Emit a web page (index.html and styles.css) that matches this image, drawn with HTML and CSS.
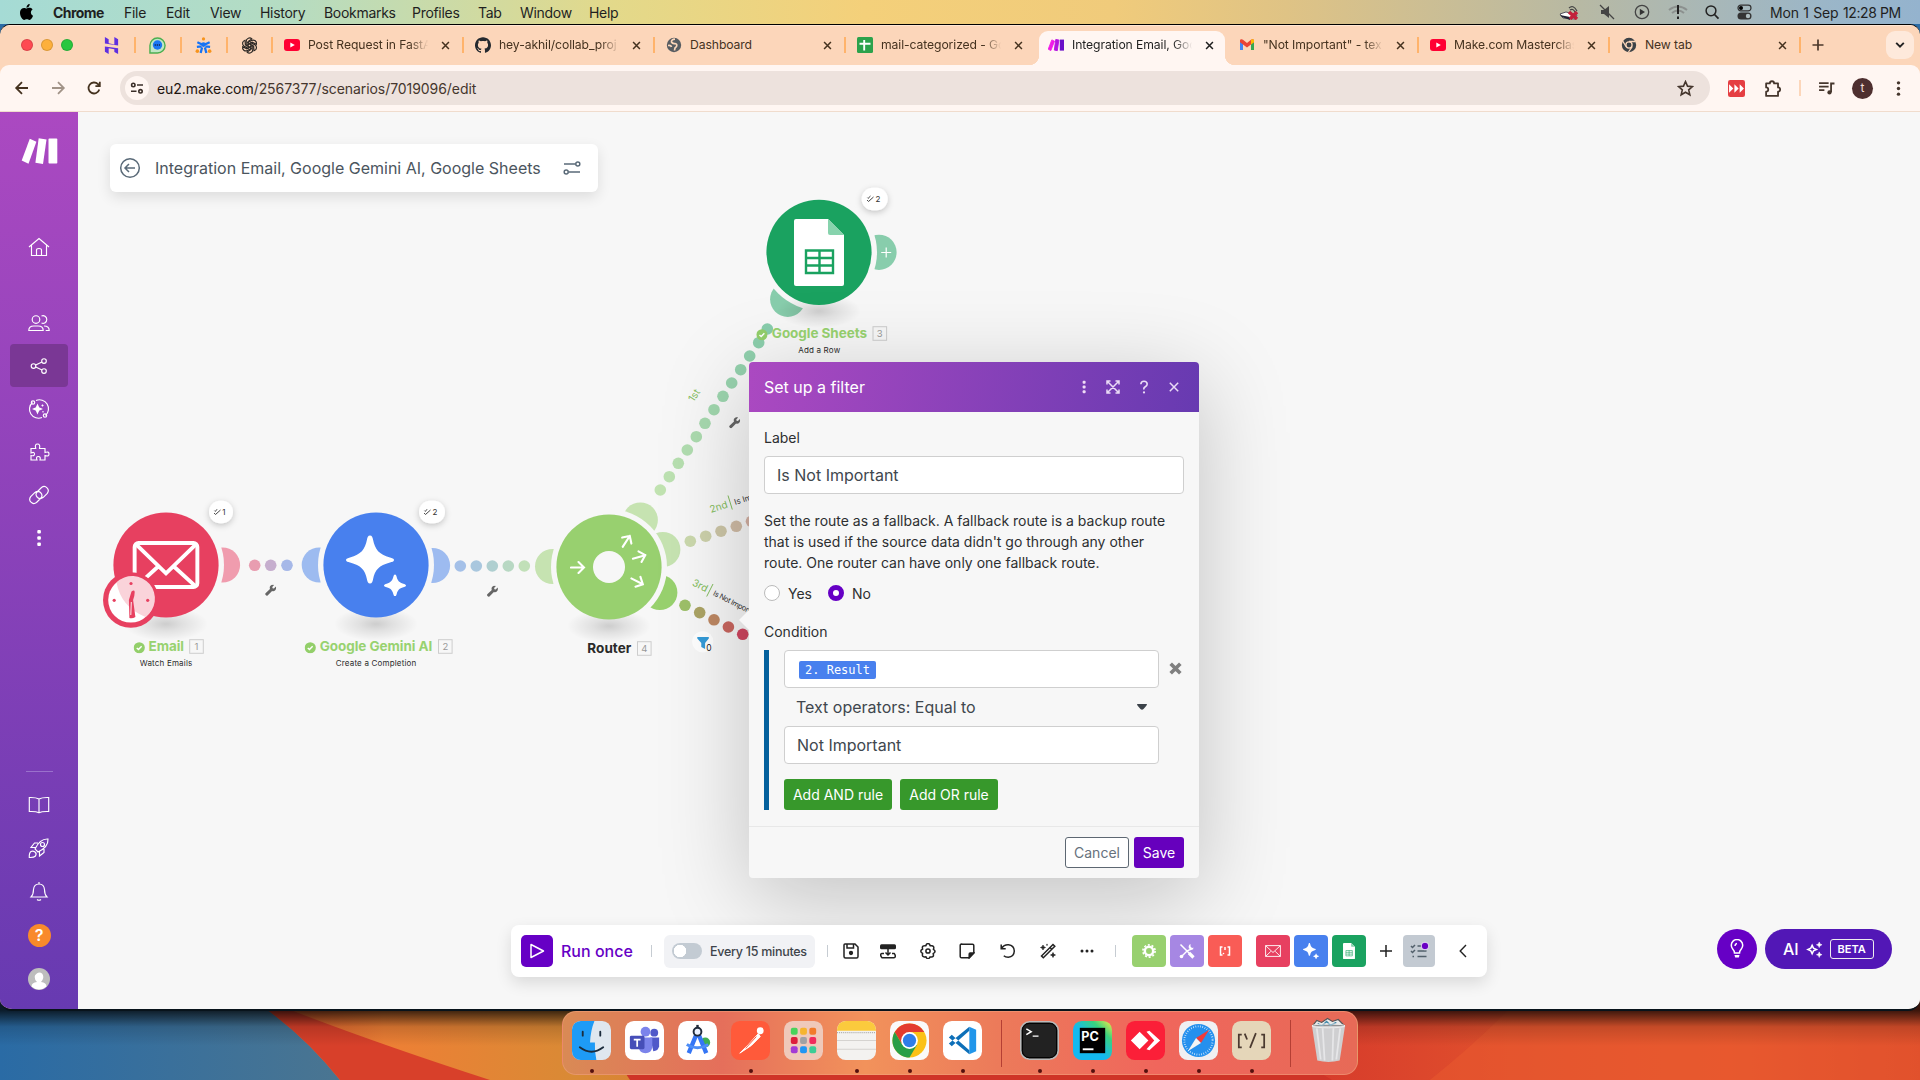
FILE: index.html
```html
<!DOCTYPE html>
<html lang="en">
<head>
<meta charset="utf-8">
<title>Integration Email, Google Gemini AI, Google Sheets</title>
<link rel="stylesheet" href="styles.css">
</head>
<body>
<svg class="defs" aria-hidden="true">
  <symbol id="close" viewBox="0 0 10 10"><path d="M1.2 1.2l7.6 7.6M8.8 1.2L1.2 8.8" fill="none" stroke="currentColor" stroke-width="1.7"/></symbol>
  <symbol id="youtube" viewBox="0 0 16 12"><rect width="16" height="12" rx="3" fill="#ff0033"/><path d="M6.3 3.4v5.2L10.8 6z" fill="#fff"/></symbol>
  <symbol id="make" viewBox="0 0 36 26"><path d="M8.300 .8l6.600 2.900L7 25.800 .2 22.600z"/><path d="M17.200 .3l7.800 1.200-3.500 24.500-7.600-1.200z"/><rect x="27" y=".6" width="8.800" height="25" rx=".8"/></symbol>
  <symbol id="wrench" viewBox="0 0 12 12"><path d="M11.300 2.200L9.300 4.200 7.900 3.800 7.600 2.500 9.500.6C8 0 6 .5 5.200 2.100c-.4.8-.3 1.700 0 2.500L.8 8.800a1.500 1.500 0 0 0 2.200 2.300l4.400-4.300c2.700.9 5-1.800 3.900-4.600z" fill="#666"/></symbol>
  <symbol id="check" viewBox="0 0 12 12"><circle cx="6" cy="6" r="5.800" fill="#93cf6a"/><path d="M3.400 6.200l1.800 1.700 3.300-3.500" fill="none" stroke="#fff" stroke-width="1.500"/></symbol>
  <symbol id="mail" viewBox="0 0 68 50"><g fill="none" stroke="currentColor" stroke-width="4"><rect x="2" y="2" width="64" height="45" rx="4"/><path d="M4 4l30 29L64 4M4 46l22-20M64 46L42 26"/></g></symbol>
  <symbol id="spark" viewBox="0 0 60 60"><path fill="currentColor" d="M24 0c2 0 2.600 2 3 4 2 10 6 15 17 18 2 .5 4 1 4 2.500s-2 2-4 2.500c-11 3-15 7-17 17-.4 2-1 4-3 4s-2.600-2-3-4C19 34 15 30 4 27c-2-.500-4-1-4-2.500S2 22.500 4 22c11-3 15-8 17-18 .400-2 1-4 3-4zM49 39c1 0 1.300 1.200 1.700 2.500 1 4 2.800 5.500 6.600 6.700 1.400.400 2.700.800 2.700 1.800s-1.300 1.400-2.700 1.800c-3.800 1.200-5.600 2.800-6.600 6.700-.4 1.300-.7 2.500-1.700 2.500s-1.300-1.200-1.700-2.500c-1-4-2.800-5.500-6.600-6.700C39.300 51.400 38 51 38 50s1.300-1.400 2.700-1.800c3.800-1.200 5.600-2.800 6.600-6.700.4-1.300.7-2.500 1.700-2.500z"/></symbol>
  <symbol id="sheet" viewBox="0 0 50 67"><path d="M2 0h32l16 16v49a2 2 0 0 1-2 2H2a2 2 0 0 1-2-2V2a2 2 0 0 1 2-2z" fill="#fff"/><path d="M34 0l16 16H36a2 2 0 0 1-2-2z" fill="#87d3ad"/><path d="M12 31.500h27v22.500H12zM12 39h27M12 46.500h27M25.500 31v23" fill="none" stroke="#1aa260" stroke-width="2.400"/></symbol>
  <symbol id="counter" viewBox="0 0 8 8"><path d="M.6 5l1.400 1.500L7 2M.8 2.600l.8.800L4 1" fill="none" stroke="#444" stroke-width="1"/></symbol>
  <symbol id="arrow" viewBox="0 0 16 14"><path d="M1 7h13M8.500 1.500L14 7l-5.500 5.500" fill="none" stroke="#fff" stroke-width="2.100" stroke-linecap="round"/></symbol>
</svg>

<header class="menubar">
  <svg class="apple" viewBox="0 0 24 24"><path d="M12.152 6.896c-.948 0-2.415-1.078-3.960-1.040-2.040.027-3.910 1.183-4.961 3.014-2.117 3.675-.546 9.103 1.519 12.090 1.013 1.454 2.208 3.090 3.792 3.039 1.520-.065 2.090-.987 3.935-.987 1.831 0 2.350.987 3.960.948 1.637-.026 2.676-1.480 3.676-2.948 1.156-1.688 1.636-3.325 1.662-3.415-.039-.013-3.182-1.221-3.220-4.857-.026-3.040 2.480-4.494 2.597-4.559-1.429-2.090-3.623-2.324-4.390-2.376-2-.156-3.675 1.090-4.610 1.090zM15.530 3.830c.843-1.012 1.400-2.427 1.245-3.830-1.207.052-2.662.805-3.532 1.818-.780.896-1.454 2.338-1.273 3.714 1.338.104 2.715-.688 3.559-1.701"/></svg>
  <nav class="menus"><b>Chrome</b><span>File</span><span>Edit</span><span>View</span><span>History</span><span>Bookmarks</span><span>Profiles</span><span>Tab</span><span>Window</span><span>Help</span></nav>
  <div class="status">
    <svg viewBox="0 0 20 16"><path d="M1 10l6-2 11 3-2 4-12-1z" fill="#fff" stroke="#334" stroke-width=".8"/><path d="M1 11l10 2v3L3 13z" fill="#223"/><path d="M10 8l8 7M18 8l-7 7" stroke="#c3203a" stroke-width="3.500"/><path d="M10 4q4-4 8 3M11 6q3-2 5 2" fill="none" stroke="#444" stroke-width="1.200"/></svg>
    <svg viewBox="0 0 20 16"><path d="M4 6h3l5-4v12l-5-4H4z" fill="#444"/><path d="M3 1l14 14" stroke="#444" stroke-width="1.300"/></svg>
    <svg viewBox="0 0 20 16"><circle cx="10" cy="8" r="6.700" fill="none" stroke="#444" stroke-width="1.300"/><path d="M7.800 4.800v6.400L13 8z" fill="#333"/></svg>
    <svg viewBox="0 0 20 16"><path d="M1 6q9-7 18 0M4 9q6-5 12 0" fill="none" stroke="#777" opacity=".6" stroke-width="2"/><path d="M10 1v9M10 12.500v2.500" stroke="#222" stroke-width="2"/></svg>
    <svg viewBox="0 0 20 16"><circle cx="9" cy="6.800" r="4.900" fill="none" stroke="#222" stroke-width="1.500"/><path d="M12.500 10.500l4 4.200" stroke="#222" stroke-width="1.800"/></svg>
    <svg viewBox="0 0 20 16"><rect x="3" y="1.200" width="13" height="5.600" rx="2.800" fill="none" stroke="#333" stroke-width="1.200"/><circle cx="6" cy="4" r="2"/><rect x="2.500" y="8.500" width="14" height="7" rx="3.500" fill="#333"/><circle cx="13" cy="12" r="2.200" fill="#aebcbf"/></svg>
  </div>
  <time class="date">Mon 1 Sep</time><time class="clock">12:28 PM</time>
</header>

<main class="window">
  <div class="tabstrip">
    <div class="lights"><i class="red"></i><i class="amber"></i><i class="green"></i></div>
    <div class="pinned"><svg viewBox="0 0 16 18"><path d="M1 0l4 2.500v4L11 8V0l4 2.500V9L1 7zM1 10l14 2v6l-4-2v-3L5 12v6l-4-2.500z" fill="#5f2fe0"/></svg></div>
    <div class="pinned"><svg viewBox="0 0 18 18"><path d="M1 17V9a8 8 0 1 1 8 8z" fill="#bfe6c4" stroke="#4caf50" stroke-width="1.500"/><circle cx="9" cy="8.500" r="5" fill="#1976f3"/><path d="M6 8.500h6" stroke="#124" stroke-width="1.500" stroke-dasharray="1.200 1"/></svg></div>
    <div class="pinned"><svg viewBox="0 0 18 18"><g fill="none" stroke="#1673f5" stroke-width="2.400"><path d="M2.500 5.500l5 2.500M15.500 5.500l-5 2.500M2 10.500l5-.5M16 10.500l-5-.5M6 17l1.500-6M12 17l-1.500-6"/></g><g fill="#f7941d"><circle cx="9" cy="2" r="1.700"/><circle cx="2.500" cy="15" r="1.900"/><circle cx="15.500" cy="15" r="1.900"/></g><circle cx="9" cy="8" r="2.500" fill="#1673f5"/></svg></div>
    <div class="pinned"><svg viewBox="-9 -9 18 18"><g fill="none" stroke="#2c2825" stroke-width="1.250"><path id="petal" d="M-3.500 1V-4.500a3.500 3.500 0 0 1 6-2.400L-1.500 -4.200V2.200"/><use href="#petal" transform="rotate(60)"/><use href="#petal" transform="rotate(120)"/><use href="#petal" transform="rotate(180)"/><use href="#petal" transform="rotate(240)"/><use href="#petal" transform="rotate(300)"/></g></svg></div>
    <div class="tab fade"><svg class="fav"><use href="#youtube"/></svg><span>Post Request in FastA</span><svg class="x"><use href="#close"/></svg></div>
    <div class="tab fade"><svg class="fav" viewBox="0 0 24 24"><path fill="#24292f" d="M12 .297c-6.630 0-12 5.373-12 12 0 5.303 3.438 9.800 8.205 11.385.6.113.82-.258.82-.577 0-.285-.01-1.040-.015-2.040-3.338.724-4.042-1.610-4.042-1.610C4.422 18.070 3.633 17.700 3.633 17.700c-1.087-.744.084-.729.084-.729 1.205.084 1.838 1.236 1.838 1.236 1.070 1.835 2.809 1.305 3.495.998.108-.776.417-1.305.76-1.605-2.665-.3-5.466-1.332-5.466-5.930 0-1.310.465-2.380 1.235-3.220-.135-.303-.54-1.523.105-3.176 0 0 1.005-.322 3.300 1.230.96-.267 1.980-.399 3-.405 1.020.006 2.040.138 3 .405 2.280-1.552 3.285-1.230 3.285-1.230.645 1.653.24 2.873.12 3.176.765.840 1.230 1.910 1.230 3.220 0 4.610-2.805 5.625-5.475 5.920.42.360.81 1.096.81 2.220 0 1.606-.015 2.896-.015 3.286 0 .315.210.690.825.570C20.565 22.092 24 17.592 24 12.297c0-6.627-5.373-12-12-12"/></svg><span>hey-akhil/collab_proj</span><svg class="x"><use href="#close"/></svg></div>
    <div class="tab"><svg class="fav" viewBox="0 0 16 16"><circle cx="8" cy="8" r="7.200" fill="#575c61"/><path d="M9 2.200Q5 2.500 5.500 5q1 2 3.500 1.500 2.500.5 1.500 3-2 1-2 4M2 8.500q3-.5 3.500 1.500" stroke="#fbd6ba" stroke-width="1.700" fill="none"/></svg><span>Dashboard</span><svg class="x"><use href="#close"/></svg></div>
    <div class="tab fade before-active"><svg class="fav" viewBox="0 0 16 16"><rect width="16" height="16" rx="1.500" fill="#2ba24c"/><path d="M7.200 3v10.500M2.500 6.800h11" stroke="#fff" stroke-width="1.900"/></svg><span>mail-categorized - Go</span><svg class="x"><use href="#close"/></svg></div>
    <div class="tab fade active"><svg class="fav" viewBox="0 0 36 26"><path fill="#f01be8" stroke="#f01be8" stroke-width="2" d="M8.600 1.500l6 2.800L6.500 25.500.5 22.500z"/><path fill="#b514e0" stroke="#b514e0" stroke-width="2" d="M17.500.5l7 1.200-3.500 24-6.800-1.200z"/><rect fill="#6a0fc8" x="26.500" y=".8" width="9.500" height="24.800"/></svg><span>Integration Email, Goo</span><svg class="x"><use href="#close"/></svg></div>
    <div class="tab fade"><svg class="fav" viewBox="0 0 16 16"><path d="M1 4v9h3V6z" fill="#4285f4"/><path d="M15 4v9h-3V6z" fill="#34a853"/><path d="M1 3.500C1 2 3 1.800 4 2.700L8 6l4-3.300c1-.9 3-.7 3 .8v1.800L8 10.500 1 5.300z" fill="#ea4335"/><path d="M12 2.700c1-.9 3-.7 3 .8v1.800l-3 2.300z" fill="#fbbc04"/></svg><span>"Not Important" - tex</span><svg class="x"><use href="#close"/></svg></div>
    <div class="tab fade"><svg class="fav"><use href="#youtube"/></svg><span>Make.com Masterclas</span><svg class="x"><use href="#close"/></svg></div>
    <div class="tab"><svg class="fav" viewBox="0 0 16 16"><circle cx="8" cy="8" r="7.200" fill="#3c4247"/><circle cx="8" cy="8" r="3.100" fill="none" stroke="#fbd6ba" stroke-width="1.300"/><path d="M8 4.500h6.500M5 9.500L1.700 4M11 9.800L7.500 15" stroke="#fbd6ba" stroke-width="1.300"/></svg><span>New tab</span><svg class="x"><use href="#close"/></svg></div>
    <svg class="newtab" viewBox="0 0 12 12"><path d="M6 .5v11M.5 6h11" stroke="#4b382b" stroke-width="1.700"/></svg>
    <button class="tabsearch"><svg viewBox="0 0 10 8"><path d="M1.200 1.800L5 5.600l3.800-3.800" fill="none" stroke="#222" stroke-width="1.900"/></svg></button>
  </div>

  <div class="navbar">
    <svg class="nav" viewBox="0 0 16 16"><path d="M14 8H2.500M8 2.200L2.200 8 8 13.800"/></svg>
    <svg class="nav dim" viewBox="0 0 16 16"><path d="M2 8h11.500M8 2.200L13.800 8 8 13.800"/></svg>
    <svg class="nav" viewBox="0 0 16 16"><path d="M13.300 9.500A5.500 5.500 0 1 1 12 4.200L13.500 6M13.800 1.800V6.200H9.400"/></svg>
    <div class="omnibox">
      <span class="site"><svg viewBox="0 0 14 12"><g fill="none" stroke="#3a2e28" stroke-width="1.600"><circle cx="3.300" cy="3" r="1.700"/><path d="M7 3h6M1 9.300h5.500"/><circle cx="10.500" cy="9.300" r="1.700"/></g></svg></span>
      <span class="url"><b>eu2.make.com</b>/2567377/scenarios/7019096/edit</span>
      <svg class="star" viewBox="0 0 16 16"><path d="M8 1.500l1.900 4.300 4.700.4-3.600 3.100 1.100 4.600L8 11.500l-4.100 2.400L5 9.300 1.400 6.200l4.700-.4z" fill="none" stroke="#45362d" stroke-width="1.500"/></svg>
    </div>
    <div class="extensions">
      <svg viewBox="0 0 16 16"><rect width="16" height="16" rx="2" fill="#e53e42"/><path d="M1 4l4 4-4 4zM6 4l4 4-4 4zM11 4l4 4-4 4z" fill="#fff"/></svg>
      <svg viewBox="0 0 16 16"><path d="M2 3.200h3.500a2 2 0 0 1 4 0h3.700V7a2 2 0 0 1 0 4v4H2v-4a2 2 0 0 0 0-4z" fill="none" stroke="#45362d" stroke-width="1.700" stroke-linejoin="round"/></svg>
      <i class="bar"></i>
      <svg viewBox="0 0 16 16"><path d="M1 3h9M1 6.300h9M1 9.600h5" stroke="#45362d" stroke-width="1.600"/><path d="M12.300 11.500V3.300H15.500" fill="none" stroke="#45362d" stroke-width="1.700"/><circle cx="10.800" cy="11.700" r="2" fill="#45362d"/></svg>
      <span class="me">t</span>
      <svg viewBox="0 0 16 16" fill="#45362d"><circle cx="8" cy="2.700" r="1.600"/><circle cx="8" cy="8" r="1.600"/><circle cx="8" cy="13.300" r="1.600"/></svg>
    </div>
  </div>

  <div class="app">
    <aside class="sidebar">
      <svg class="logo" fill="#fff"><use href="#make"/></svg>
      <a class="item home"><svg viewBox="0 0 22 22"><path d="M1 11L11 2.500 21 11M3.500 9.500V19.500h15V9.500M8.500 19.500V14q0-1.500 2.500-1.500t2.500 1.500v5.500"/></svg></a>
      <a class="item"><svg viewBox="0 0 22 22"><circle cx="8" cy="7.500" r="3.800"/><path d="M.8 18.500q0-4.500 5-4.500h4.400q5 0 5 4.500zM13.500 4a3.800 3.800 0 1 1 0 7M16 14q5.200 0 5.200 4.500h-3.500"/></svg></a>
      <a class="item on"><svg viewBox="0 0 22 22"><circle cx="5.500" cy="11" r="2.300"/><circle cx="16" cy="6" r="2.300"/><circle cx="16" cy="16" r="2.300"/><path d="M7.700 10L14 7M7.700 12l6.300 3"/></svg></a>
      <a class="item"><svg viewBox="0 0 22 22"><path d="M4.500 4.500a9 9 0 0 0 9.500 15M17.500 17.500A9 9 0 0 0 8 2.500"/><circle cx="17" cy="17.500" r="1.700"/><circle cx="5" cy="4.500" r="1.700"/><path fill="#fff" d="M9.500 7l1.200 2.800 2.800 1.200-2.800 1.200L9.500 15l-1.200-2.800L5.500 11l2.800-1.200zM14.500 6.500v2M13.500 7.500h2M15 13v1.500"/></svg></a>
      <a class="item"><svg viewBox="0 0 22 22"><path d="M3 7.500h4.700Q6.500 3 9.500 3t2 4.500H17v4q4-1.500 4 1.500t-4 1.500V19h-5q1-3.500-1.700-3.500T9 19H3v-4.500q3.500 1 3.500-1.500T3 12z"/></svg></a>
      <a class="item"><svg viewBox="0 0 22 22"><path d="M9.500 13.500q-3-3 0-6l4-4q3-2.200 5.500.3t.3 5.500l-4 4q-3 2.500-5.800.2M12.500 8.500q3 3 0 6l-4 4q-3 2.200-5.500-.3t-.3-5.500l4-4q3-2.500 5.800-.2"/></svg></a>
      <a class="item"><svg viewBox="0 0 22 22"><g fill="#fff" stroke="none"><rect x="9.300" y="3" width="3.600" height="3.600" rx="1"/><rect x="9.300" y="9.200" width="3.600" height="3.600" rx="1"/><rect x="9.300" y="15.400" width="3.600" height="3.600" rx="1"/></g></svg></a>
      <hr>
      <a class="item"><svg viewBox="0 0 22 22"><path d="M11 5q-3-1.700-9.700-1.500v14Q8 17.200 11 18.700q3-1.500 9.700-1.200v-14Q14 3.300 11 5zM11 5v13.500"/></svg></a>
      <a class="item"><svg viewBox="0 0 22 22"><path d="M7 12Q12 1.500 20 2q.5 8-10 13zM7.500 10.500H3L6.500 6H10M11.500 14.500V19l4.500-3.500V12M3 14.500Q1 16 1.300 20.500 6 20.700 7.500 19 9 16.500 7 15T3 14.500z"/><circle cx="14.500" cy="7.500" r="2"/></svg></a>
      <a class="item"><svg viewBox="0 0 22 22"><path d="M3 17Q5.500 14.500 5.500 9.500 6 4 11 4t5.500 5.500q0 5 2.500 7.500zM11 4V2M9 19.500q2 1.500 4 0"/></svg></a>
      <a class="item help"><span>?</span></a>
      <a class="item last"><svg viewBox="0 0 22 22"><circle cx="11" cy="11" r="11" fill="#bdbdbd" stroke="none"/><path d="M11 4.500c3 0 4.300 2 4.300 4.500S13 14 13 14q5.500.7 5.500 4.500a11 11 0 0 1-15 0Q3.500 14.700 9 14 6.700 12 6.700 9T11 4.500z" fill="#fff" stroke="none"/></svg></a>
    </aside>

    <section class="canvas">
      <svg class="flow" viewBox="78 112 1842 897">
        <defs>
          <radialGradient id="shade"><stop offset="0" stop-color="#000" stop-opacity=".17"/><stop offset=".4" stop-color="#000" stop-opacity=".09"/><stop offset="1" stop-color="#000" stop-opacity="0"/></radialGradient>
          <filter id="lift" x="-50%" y="-50%" width="200%" height="200%"><feDropShadow dx="0" dy="2" stdDeviation="3" flood-opacity=".22"/></filter>
        </defs>
        <!-- connector ears -->
        <circle cx="222.500" cy="565" r="17.600" fill="#f09cae"/>
        <g fill="#9dbbf0"><circle cx="319.300" cy="565" r="17.600"/><circle cx="432.500" cy="565.500" r="17.600"/></g>
        <g fill="#c6e3b1"><circle cx="552.600" cy="566.500" r="17.600"/><circle cx="662.800" cy="549.500" r="17.600"/><circle cx="640.300" cy="520" r="17.600"/></g>
        <circle cx="659.800" cy="592.500" r="17.600" fill="#98d16e"/>
        <g fill="#88cdac"><circle cx="787.700" cy="299.300" r="17.600"/><circle cx="879" cy="252.300" r="17.600"/></g>
        <path d="M886.200 247.500v10M881.200 252.500h10" stroke="#fff" stroke-width="1.200"/>
        <g fill="#f7f7f7"><circle cx="166" cy="565" r="58"/><circle cx="376" cy="565" r="58"/><circle cx="609" cy="567" r="58"/><circle cx="819" cy="252.300" r="58"/></g>
        <g fill="url(#shade)"><ellipse cx="166" cy="624" rx="42" ry="17"/><ellipse cx="376" cy="624" rx="42" ry="17"/><ellipse cx="609" cy="626" rx="42" ry="17"/><ellipse cx="819" cy="311" rx="42" ry="17"/></g>
        <circle cx="166" cy="565" r="52.600" fill="#e74060"/><circle cx="376" cy="565" r="52.600" fill="#4880ee"/><circle cx="609" cy="567" r="52.600" fill="#98d06f"/><circle cx="819" cy="252.300" r="52.600" fill="#1aa260"/>
        <!-- routes -->
        <circle cx="254.700" cy="565.300" r="5.800" fill="#e89db0"/><circle cx="270.700" cy="565.300" r="5.800" fill="#c6aece"/><circle cx="287" cy="565.300" r="5.800" fill="#a6b8e8"/>
        <circle cx="460.300" cy="566" r="5.800" fill="#a4c0e8"/><circle cx="476.300" cy="566" r="5.800" fill="#a9c7de"/><circle cx="492.300" cy="566" r="5.800" fill="#afcfd0"/><circle cx="508.300" cy="566" r="5.800" fill="#b8d8c3"/><circle cx="524.300" cy="566" r="5.800" fill="#c1e0b8"/>
        <circle cx="660.300" cy="490" r="5.800" fill="#c1e3b1"/><circle cx="669.300" cy="476.700" r="5.800" fill="#bce1b1"/><circle cx="678.300" cy="463.300" r="5.800" fill="#b7dfb0"/><circle cx="687.300" cy="450" r="5.800" fill="#b1ddb0"/><circle cx="696.300" cy="436.700" r="5.800" fill="#acdbaf"/><circle cx="705" cy="423.300" r="5.800" fill="#a7d9af"/><circle cx="714" cy="409.700" r="5.800" fill="#a1d7ae"/><circle cx="723" cy="396.300" r="5.800" fill="#9cd5ae"/><circle cx="731.700" cy="383" r="5.800" fill="#98d3ae"/><circle cx="740.700" cy="369.700" r="5.800" fill="#94d1ad"/><circle cx="749.700" cy="356" r="5.800" fill="#90d0ad"/><circle cx="758.700" cy="342.700" r="5.800" fill="#8cceac"/><circle cx="767.300" cy="329" r="5.800" fill="#88cdac"/>
        <circle cx="690.300" cy="541.200" r="5.800" fill="#cbd9ad"/><circle cx="705.700" cy="536.200" r="5.800" fill="#cdd1ab"/><circle cx="721" cy="531.200" r="5.800" fill="#cdc6a7"/><circle cx="736.300" cy="526.300" r="5.800" fill="#d0bca6"/><circle cx="751.500" cy="521.300" r="5.800" fill="#d4b1a4"/>
        <circle cx="685" cy="605.300" r="5.800" fill="#9dc069"/><circle cx="699.700" cy="612.600" r="5.800" fill="#aca465"/><circle cx="714" cy="619.800" r="5.800" fill="#be8863"/><circle cx="728.400" cy="627" r="5.800" fill="#c9665f"/><circle cx="742.700" cy="634.300" r="5.800" fill="#d04660"/>
        <use href="#mail" x="132" y="541" width="68" height="49" color="#fff"/>
        <use href="#spark" x="346" y="535" width="60" height="61" color="#fff"/>
        <use href="#sheet" x="794" y="219" width="50" height="67"/>
        <circle cx="609" cy="567" r="16" fill="#f7f7f7"/>
        <use href="#arrow" x="570" y="560.500" width="16" height="14"/>
        <use href="#arrow" x="618.500" y="534" width="16" height="14" transform="rotate(-57 626.500 541)"/>
        <use href="#arrow" x="631.500" y="549.800" width="16" height="14" transform="rotate(-16 639.500 556.800)"/>
        <use href="#arrow" x="629.500" y="574.500" width="16" height="14" transform="rotate(27 637.500 581.500)"/>
        <!-- schedule clock -->
        <circle cx="130.800" cy="600" r="27.800" fill="#e74060"/><circle cx="130.800" cy="600" r="22.600" fill="#fff"/>
        <path d="M116.500 582.500A22.600 22.600 0 1 1 145.500 617Q121 607 116.500 582.500z" fill="#fad3da"/>
        <g fill="#e74060"><circle cx="131" cy="583.500" r="1.600"/><circle cx="114.200" cy="600.300" r="1.600"/><circle cx="147.700" cy="600.300" r="1.600"/><path d="M131.500 591.500q3-2 3.200.5 0 4-1.600 8l2.300 17q-3 2-6 1l-.5-18z"/></g><path d="M131.300 602l-.5 13" stroke="#fff" stroke-width=".9"/>
        <use href="#wrench" x="265" y="584.500" width="11.500" height="11.500"/><use href="#wrench" x="486.800" y="585.500" width="11.500" height="11.500"/><use href="#wrench" x="729" y="417" width="11.500" height="11.500"/>
        <!-- operation counters -->
        <g filter="url(#lift)" fill="#fff"><rect x="209" y="500.700" width="24" height="22.600" rx="11.300"/><rect x="419" y="500.700" width="26" height="22.600" rx="11.300"/><rect x="861.700" y="187.700" width="26" height="22.600" rx="11.300"/></g>
        <use href="#counter" x="213.500" y="508" width="8" height="8"/><use href="#counter" x="423.500" y="508" width="8" height="8"/><use href="#counter" x="866.500" y="195" width="8" height="8"/>
        <g class="ops"><text x="222.300" y="514.800">1</text><text x="432.500" y="514.800">2</text><text x="875.500" y="201.800">2</text></g>
        <!-- names -->
        <use href="#check" x="133.500" y="642" width="11.500" height="11.500"/><use href="#check" x="304.500" y="642" width="11.500" height="11.500"/><use href="#check" x="756.200" y="329" width="11.500" height="11.500"/>
        <g class="name"><text x="148.500" y="651.400" textLength="35.500">Email</text><text x="319.800" y="651.400" textLength="112.500">Google Gemini AI</text><text x="771.800" y="338.300" textLength="95.200">Google Sheets</text><text class="dark" x="587.300" y="653.400" textLength="44">Router</text></g>
        <g fill="none" stroke="#cdcdcd"><rect x="189.700" y="639.700" width="13.600" height="13.600"/><rect x="438.500" y="639.700" width="13.600" height="13.600"/><rect x="637.500" y="641.700" width="13.600" height="13.600"/><rect x="873" y="326.700" width="13.600" height="13.600"/></g>
        <g class="num"><text x="196.500" y="650">1</text><text x="445.300" y="650">2</text><text x="644.300" y="652">4</text><text x="879.800" y="337">3</text></g>
        <g class="sub"><text x="166" y="666" textLength="52.500">Watch Emails</text><text x="376" y="666" textLength="80.500">Create a Completion</text><text x="819.200" y="353" textLength="42">Add a Row</text></g>
        <!-- route labels -->
        <g class="ord"><text transform="translate(693.500 402.500) rotate(-56)">1st</text><text transform="translate(711 513) rotate(-18)">2nd</text><text transform="translate(691.500 585) rotate(26.700)">3rd</text></g>
        <path d="M728 495.500l4.300 14M713 584l-6.300 12.500" stroke="#83bd5c" stroke-width="1"/>
        <g class="cond"><text transform="translate(735.300 505) rotate(-18)">Is Important</text><text class="tight" transform="translate(712.500 595) rotate(26.700)" textLength="51">Is Not Important</text></g>
        <circle cx="702.800" cy="641.800" r="10.600" fill="#fff"/><path d="M697.300 637h11.500v1.500l-3.700 4.500v6l-3.800-2v-4l-4-4.500z" fill="#349bd8"/><text class="zero" x="706.200" y="651">0</text>
      </svg>

      <div class="title">
        <svg viewBox="0 0 22 22"><circle cx="11" cy="11" r="9.300"/><path d="M16 11H6.500M10 7l-4 4 4 4"/></svg>
        <h1>Integration Email, Google Gemini AI, Google Sheets</h1>
        <svg class="sliders" viewBox="0 0 18 14"><path d="M1 3h11.500M5.500 11H17"/><circle cx="14.800" cy="3" r="2"/><circle cx="3.200" cy="11" r="2"/></svg>
      </div>

      <div class="toolbar">
        <button class="play"><svg viewBox="0 0 16 16"><path d="M2 1.500v13L14.500 8z" fill="none" stroke="#fff" stroke-width="1.500" stroke-linejoin="round"/></svg></button>
        <span class="run">Run once</span>
        <i class="sep s1"></i>
        <div class="schedule"><i class="toggle"></i><span>Every 15 minutes</span></div>
        <i class="sep s2"></i>
        <div class="tools">
          <svg viewBox="0 0 16 16"><path d="M2 1h10l3 3v9.500a1.500 1.500 0 0 1-1.500 1.500h-11A1.500 1.500 0 0 1 1 13.500V2a1 1 0 0 1 1-1zM4 1v4h6.500V1"/><circle cx="8" cy="10" r="1.400" fill="#222"/></svg>
          <svg viewBox="0 0 16 16"><rect x="0" y="1.200" width="16" height="5" rx="1.500" fill="#222" stroke="none"/><path d="M8 6v5.500M5.500 9.500L8 12l2.500-2.500M4 10.500H1.800Q.7 10.500.7 12T2 14.700h12q1.300 0 1.300-1.500t-1.100-2.700H12"/></svg>
          <svg viewBox="0 0 16 16"><path d="M6.500 1.300Q8-.2 9.500 1.300l.7 1.400 1.600.1Q14 3 13.800 5l-.4 1.200 1 1q1.200 1.300-.2 2.600l-1 .8.3 1.500q0 2-2 2l-1.500-.1-.6 1Q8 16.400 6.600 15l-.7-1.200-1.600.1q-2.100-.2-1.900-2.200l.2-1.300-1.100-.9Q.200 8.100 1.500 6.900l1.100-.8L2.300 4.700Q2.400 2.800 4.300 2.800l1.500-.1z"/><circle cx="8" cy="8" r="2.100"/></svg>
          <svg viewBox="0 0 16 16"><path d="M2.500 1.200h11a1.300 1.300 0 0 1 1.300 1.300V10l-4.600 4.800H2.500a1.300 1.300 0 0 1-1.300-1.300v-11a1.300 1.300 0 0 1 1.300-1.500z"/><path d="M14.800 10l-4.600 4.800V11q0-1 1-1z" fill="#222"/></svg>
          <svg viewBox="0 0 16 16"><path d="M1.200 1.500v4.300h4.500M1.500 5.500Q4 1.500 8.500 1.800q5.500.6 5.800 6.200-.3 5.800-6 6.300-3 0-4.500-1.500"/></svg>
          <svg viewBox="0 0 16 16"><path d="M1.500 13L13 1.500l1.800 1.700L3.300 14.800zM10 4.500L11.500 6"/><path fill="#222" stroke-width=".6" d="M3 2l.8 1.700L5.500 4.500l-1.700.8L3 7l-.8-1.700L.5 4.500l1.700-.8zM13 9.500l.8 1.700 1.700.8-1.700.8-.8 1.700-.8-1.700-1.700-.8 1.700-.8zM7 .8v2M6 1.800h2"/></svg>
          <svg viewBox="0 0 16 16"><g fill="#222" stroke="none"><circle cx="3" cy="8" r="1.500"/><circle cx="8" cy="8" r="1.500"/><circle cx="13" cy="8" r="1.500"/></g></svg>
        </div>
        <i class="sep s3"></i>
        <div class="apps">
          <b class="c1"><svg viewBox="0 0 16 16"><circle cx="8" cy="8" r="4.200" fill="none" stroke="#fff" stroke-width="2.500"/><circle cx="8" cy="8" r="6.100" fill="none" stroke="#fff" stroke-width="1.600" stroke-dasharray="2 1.830"/></svg></b>
          <b class="c2"><svg viewBox="0 0 16 16"><path d="M1.500 1.500l7 7M8.500 8.500l5.500 5.500M14 5.500Q10 7 8 8L2 14" stroke="#fff" stroke-width="1.500" fill="none"/><path d="M10 10l4.500 4.500" stroke="#fff" stroke-width="3.200"/><path d="M11.500 1q-2.700 1.500-1.500 4.500 2.500 2 5-.8l-2 .2-1.500-1.500z" fill="#fff"/><circle cx="2.500" cy="13.500" r="1.800" fill="#fff"/></svg></b>
          <b class="c3"><svg viewBox="0 0 16 16"><path d="M5.500 4H3.500v8h2M10.500 4h2v8h-2" fill="none" stroke="#fff" stroke-width="1.500"/><path d="M8 4v3" stroke="#fff" stroke-width="1.500"/><circle cx="6.500" cy="10.500" r=".8" fill="#fff"/></svg></b>
          <b class="c4"><svg viewBox="0 0 16 16"><path d="M.6 2.600h14.800v10.800H.6zM.6 2.600L8 9.500l7.400-6.900M.6 13.400l5.200-5M15.400 13.400l-5.200-5" fill="none" stroke="#fff" stroke-width=".9"/></svg></b>
          <b class="c5"><svg color="#fff"><use href="#spark"/></svg></b>
          <b class="c6"><svg><use href="#sheet"/></svg></b>
        </div>
        <svg class="plus" viewBox="0 0 12 12"><path d="M6 0v12M0 6h12" stroke="#222" stroke-width="1.500"/></svg>
        <div class="queue"><svg viewBox="0 0 18 16"><path d="M1 3l1.500 1.500L5 2M1 8l1.500 1.500L5 7M7.500 3h6M7.500 8h9M7.500 13.500h9M2.500 13.500h1.500" fill="none" stroke="#52606b" stroke-width="1.500"/><circle cx="15" cy="3" r="3.800" fill="#6a00c4" stroke="#fff" stroke-width=".8"/></svg></div>
        <svg class="chev" viewBox="0 0 8 14"><path d="M7 1L1.200 7 7 13" fill="none" stroke="#222" stroke-width="1.400"/></svg>
      </div>

      <div class="assist">
        <button class="bulb"><svg viewBox="0 0 16 20"><path d="M5.500 14Q5.500 12 3.700 10A5.700 5.700 0 1 1 12.300 10Q10.500 12 10.500 14zM6 7Q6 5 8 4.600" fill="none" stroke="#fff" stroke-width="1.500"/><path d="M5.500 16h5l-.7 2.500H6.200z" fill="#fff"/></svg></button>
        <button class="ai"><span>AI</span><svg viewBox="0 0 18 18"><path d="M7 4.500l1.400 3.100L11.500 9l-3.100 1.400L7 13.500l-1.400-3.100L2.500 9l3.100-1.400z" fill="none" stroke="#fff" stroke-width="1.600" transform="translate(-.5 0)"/><path fill="#fff" d="M14 1l.9 2.100L17 4l-2.100.9L14 7l-.9-2.100L11 4l2.100-.9zM14 11.500l.9 2.100 2.100.9-2.100.9-.9 2.100-.9-2.100-2.100-.9 2.100-.9z" stroke="#fff" stroke-width=".5"/></svg><em>BETA</em></button>
      </div>

      <form class="modal">
        <header><h2>Set up a filter</h2>
          <svg viewBox="0 0 14 14" fill="#f0dcf6"><rect x="5.600" y=".8" width="3" height="3" rx="1"/><rect x="5.600" y="5.500" width="3" height="3" rx="1"/><rect x="5.600" y="10.200" width="3" height="3" rx="1"/></svg>
          <svg viewBox="0 0 14 14"><path d="M1 4.500V1h3.500M9.500 1H13v3.500M13 9.500V13H9.500M4.500 13H1V9.500M1.500 1.500l11 11M12.500 1.500l-11 11" fill="none" stroke="#eadcf6" stroke-width="1.500"/></svg>
          <svg viewBox="0 0 14 14"><path d="M3.800 4.300Q4 1.200 7 1.200t3.200 2.800Q10.200 5.700 8.300 6.700T7 9.500" fill="none" stroke="#eadcf6" stroke-width="1.600"/><circle cx="7" cy="12.400" r="1.100" fill="#eadcf6"/></svg>
          <svg viewBox="0 0 14 14"><path d="M2.800 2.800l8.400 8.400M11.200 2.800l-8.400 8.400" stroke="#eadcf6" stroke-width="1.500"/></svg>
        </header>
        <div class="body">
          <label class="lbl">Label</label>
          <div class="input">Is Not Important</div>
          <p>Set the route as a fallback. A fallback route is a backup route that is used if the source data didn't go through any other route. One router can have only one fallback route.</p>
          <div class="radios"><i></i><span>Yes</span><i class="sel"></i><span>No</span></div>
          <label class="lbl cnd">Condition</label>
          <div class="rule">
            <div class="fields">
              <div class="input"><span class="tag">2. Result</span></div>
              <div class="select">Text operators: Equal to<svg viewBox="0 0 10 6"><path d="M0 0h10Q9.800 1.500 8.500 2.800L6.500 5Q5 6.500 3.500 5L1.500 2.800Q.2 1.500 0 0z" fill="#3b4249"/></svg></div>
              <div class="input">Not Important</div>
              <div class="adds"><button type="button">Add AND rule</button><button type="button">Add OR rule</button></div>
            </div>
            <svg class="remove" viewBox="0 0 14 14"><path d="M2.500 2.500l9 9M11.500 2.500l-9 9" stroke="#808080" stroke-width="3.400"/></svg>
          </div>
        </div>
        <footer><button type="button" class="cancel">Cancel</button><button type="button" class="save">Save</button></footer>
      </form>
    </section>
  </div>
</main>

<div class="desk">
  <svg class="wall" viewBox="0 0 1920 82" preserveAspectRatio="none">
    <defs>
      <linearGradient id="blue"><stop offset="0" stop-color="#2a6ba5"/><stop offset="1" stop-color="#4a7591"/></linearGradient>
      <linearGradient id="orange"><stop offset="0" stop-color="#c92f28"/><stop offset=".14" stop-color="#dd5a2c"/><stop offset=".2" stop-color="#ee7f35"/><stop offset=".3" stop-color="#d98a35"/><stop offset=".68" stop-color="#d63a2b"/><stop offset=".8" stop-color="#e2532d"/><stop offset=".9" stop-color="#e8592f"/><stop offset="1" stop-color="#d8482a"/></linearGradient>
      <linearGradient id="fall" x2="0" y2="1"><stop offset=".25" stop-opacity=".75"/><stop offset=".6" stop-opacity=".15"/><stop offset="1" stop-opacity="0"/></linearGradient>
    </defs>
    <rect width="1920" height="82" fill="url(#orange)"/>
    <path d="M0 0h250q50 32 90 82H0z" fill="url(#blue)"/><path d="M250 0h10q100 40 230 82H340Q300 32 250 0z" fill="#d8402a"/>
    <path d="M622 70h690l20 12H630z" fill="#cf3427"/><path d="M1430 82q50-40 90-82h400v82z" fill="#e8592f" opacity=".6"/>
    <rect width="1920" height="48" fill="url(#fall)"/>
  </svg>
  <div class="dock">
    <span class="run-dot"><svg viewBox="0 0 40 40"><rect width="40" height="40" rx="9" fill="#dfe7ef"/><path d="M9 0h14q-4 10-4.500 22h5q-.5 9 1.500 18H9a9 9 0 0 1-9-9V9a9 9 0 0 1 9-9z" fill="#1e9bf6"/><path d="M11 11v4M29 11v4M8 27q12 9 24 0" fill="none" stroke="#1c2c3c" stroke-width="1.900" stroke-linecap="round"/></svg></span>
    <span><svg viewBox="0 0 40 40"><rect width="40" height="40" rx="9" fill="#fff"/><circle cx="30" cy="12" r="4" fill="#5059c9"/><circle cx="21" cy="11" r="5" fill="#7b83eb"/><path d="M26 17h9v9q-1 5-6 5z" fill="#5059c9"/><path d="M14 17h14v10q-1 6-7 6t-7-6z" fill="#7b83eb"/><rect x="5" y="15" width="15" height="14" rx="1.500" fill="#464eb8"/><path d="M9 19h7M12.500 19v7.500" stroke="#fff" stroke-width="1.800"/></svg></span>
    <span><svg viewBox="0 0 40 40"><rect width="40" height="40" rx="9" fill="#fff"/><circle cx="28" cy="22" r="5" fill="#3fae53"/><path d="M20 11L11 33M20 11l9 22" stroke="#3576f5" stroke-width="4.500"/><path d="M9 24q11 7 22 0" fill="none" stroke="#4c8df6" stroke-width="3"/><circle cx="20" cy="11" r="4" fill="#eaf1ff" stroke="#202b3a" stroke-width="2"/><path d="M20 4v3" stroke="#202b3a" stroke-width="2.500"/></svg></span>
    <span class="run-dot"><svg viewBox="0 0 40 40"><rect width="40" height="40" rx="9" fill="#ff5a3a"/><circle cx="30" cy="10" r="3.500" fill="#fff"/><path d="M28 13L18 24l-9 9 12-8 9-9z" fill="#fff" stroke="#fff"/><path d="M26 16L15 28" stroke="#ff5a3a" stroke-width="1"/></svg></span>
    <span><svg viewBox="0 0 40 40"><rect width="40" height="40" rx="9" fill="#efc9ba"/><g><rect x="7" y="7" width="7" height="7" rx="2" fill="#48d25b"/><rect x="16.500" y="7" width="7" height="7" rx="2" fill="#f6b42e"/><rect x="26" y="7" width="7" height="7" rx="2" fill="#f27b2b"/><rect x="7" y="16.500" width="7" height="7" rx="2" fill="#dd1f3c"/><rect x="16.500" y="16.500" width="7" height="7" rx="2" fill="#a1a1a3"/><rect x="26" y="16.500" width="7" height="7" rx="2" fill="#f22c5d"/><rect x="7" y="26" width="7" height="7" rx="2" fill="#a33bd5"/><rect x="16.500" y="26" width="7" height="7" rx="2" fill="#2196f3"/><rect x="26" y="26" width="7" height="7" rx="2" fill="#3ccd96"/></g></svg></span>
    <span class="run-dot"><svg viewBox="0 0 40 40"><rect width="40" height="40" rx="9" fill="#f3f2f0"/><path d="M0 10V9a9 9 0 0 1 9-9h22a9 9 0 0 1 9 9v1z" fill="#fbca3d"/><path d="M0 12h40" stroke="#999" stroke-dasharray="1 1"/><path d="M0 20h40M0 29h40" stroke="#d4d2cf"/></svg></span>
    <span class="run-dot"><svg viewBox="0 0 40 40"><rect width="40" height="40" rx="9" fill="#fafafa"/><circle cx="20" cy="20" r="17.500" fill="#fbc116"/><path d="M4.800 11.300A17.500 17.500 0 0 1 35.200 11.300H20L12.500 24z" fill="#e33b2e"/><path d="M4.800 11.300A17.500 17.500 0 0 0 20 37.500l7.600-13L12.400 24z" fill="#299e47"/><circle cx="20" cy="20" r="8.600" fill="#fff"/><circle cx="20" cy="20" r="6.800" fill="#2f7de8"/></svg></span>
    <span class="run-dot"><svg viewBox="0 0 40 40"><rect width="40" height="40" rx="9" fill="#fff"/><path d="M27 6l7 3v22l-7 3z" fill="#2196ea"/><path d="M27 10L9 26l-3-3L27 6zM27 30L9 14l-3 3 21 17z" fill="#0d6fb8"/></svg></span>
    <i></i>
    <span class="run-dot"><svg viewBox="0 0 40 40"><rect x=".8" y=".8" width="38.400" height="38.400" rx="9" fill="#1d1d1d" stroke="#bbb" stroke-width="1.600"/><rect x="2.500" y="2.500" width="35" height="35" rx="7" fill="#222" stroke="#000"/><path d="M6.500 8l5 3-5 3M13 15.500h6" fill="none" stroke="#fff" stroke-width="1.500"/></svg></span>
    <span class="run-dot"><svg viewBox="0 0 40 40"><defs><linearGradient id="pc" x1="0" y1="1" x2="1" y2="0"><stop offset=".45" stop-color="#14b9f0"/><stop offset=".75" stop-color="#39d27e"/><stop offset="1" stop-color="#f5ec45"/></linearGradient></defs><rect width="40" height="40" rx="9" fill="url(#pc)"/><rect x="7" y="7" width="26" height="26"/><text x="8.500" y="21" class="pc">PC</text><path d="M10 29h11" stroke="#fff" stroke-width="2"/></svg></span>
    <span class="run-dot"><svg viewBox="0 0 40 40"><rect width="40" height="40" rx="9" fill="#fb1f38"/><path d="M14 11l9 9-9 9-9-9zM21 11l3-1 11 10-11 10-3-1 8-9z" fill="#fff"/></svg></span>
    <span class="run-dot"><svg viewBox="0 0 40 40"><rect width="40" height="40" rx="9" fill="#f0eff2"/><circle cx="20" cy="20" r="17" fill="#2590ee"/><circle cx="20" cy="20" r="14.500" fill="none" stroke="#fff" stroke-width="2" stroke-dasharray=".6 1.800"/><path d="M31 9L17.500 17.500l5 5z" fill="#f13b3b"/><path d="M9 31l8.500-13.500 5 5z" fill="#f4f4f4"/></svg></span>
    <span class="run-dot"><svg viewBox="0 0 40 40"><rect width="40" height="40" rx="9" fill="#e5d6b9"/><path d="M10 14H7v13h3M30 14h3v13h-3M13 13l2.500 6M24.500 12.500l-6 15" fill="none" stroke="#4b3a30" stroke-width="1.800"/></svg></span>
    <i></i>
    <span><svg class="trash" viewBox="0 0 40 46"><path d="M4 8l4-5 5 2 6-4 5 3 6-2 6 6z" fill="#e8e8e8" stroke="#555" stroke-width="1.200"/><path d="M9 6l4 3 5-5 4 4 6-3" stroke="#3f88a8" fill="none" stroke-width="1.500"/><path d="M3 8h34l-5.500 36q-11.500 3-23 0z" fill="#cfcfd1"/><path d="M8 11l4 32M14 11l2 33M32 11l-4 32M25 11l-1 33" stroke="#e6e6e8" stroke-width="1.800"/><ellipse cx="20" cy="8.500" rx="17" ry="2" fill="none" stroke="#eee"/></svg></span>
  </div>
</div>
</body>
</html>
```
FILE: styles.css
```css
* { box-sizing: border-box; }
body { margin: 0; width: 1920px; height: 1080px; overflow: hidden; background: #2a6ba5; font-family: Inter, "Liberation Sans", sans-serif; color: #1f1f1f; display: flex; flex-direction: column; }
button { font: inherit; border: 0; padding: 0; }
i, em { font-style: normal; }
svg { flex: none; display: block; }
.defs { position: absolute; width: 0; height: 0; }

/* macOS menu bar */
.menubar { height: 24px; flex: none; display: flex; align-items: center; padding-left: 18px; font-size: 14px; background: linear-gradient(90deg, #a5dbd5, #b5dcc2 15%, #e3d98a 32%, #f4d07a 45%, #f0cb7b 58%, #dfc385 67%, #b8b9a3 82%, #9bb6c8 95%, #94b3ce); }
.apple { width: 17px; height: 16px; }
.menus { display: grid; grid-template-columns: 71px 42px 44px 50px 64px 88px 66px 42px 69px 40px; margin-left: 18px; letter-spacing: -.3px; white-space: nowrap; }
.menus b { font-weight: 700; letter-spacing: -.55px; }
.status { margin-left: auto; display: grid; grid-template-columns: 38px 35px 36px 34px 33px 35px; justify-items: start; }
.status svg { width: 20px; height: 16px; }
.date { width: 73px; letter-spacing: -.2px; white-space: nowrap; word-spacing: .8px; }
.clock { width: 77px; letter-spacing: -.4px; white-space: nowrap; }

/* browser chrome */
.window { height: 987px; flex: none; border-top: 1px solid #000; border-bottom: 2px solid #08131b; border-radius: 10px 10px 12px 12px; overflow: hidden; background: #fcd6ba; display: flex; flex-direction: column; }
.tabstrip { height: 40px; flex: none; display: flex; align-items: center; box-shadow: inset 0 1px #ffe6d4; }
.lights { display: flex; gap: 8px; width: 90px; padding-left: 21px; }
.lights i { width: 12px; height: 12px; border-radius: 50%; border: 1px solid #0002; }
.red { background: #fe4a52; } .amber { background: #fdb03c; } .green { background: #28c73f; }
.pinned { width: 46px; height: 16px; display: flex; align-items: center; justify-content: center; border-right: 2px solid #ffb36b; flex: none; padding-right: 1px; }
.pinned:nth-of-type(5) { width: 45px; }
.pinned svg { width: 17px; height: 17px; }
.tab { width: 191px; height: 16px; flex: none; display: flex; align-items: center; border-right: 2px solid #ffb36b; padding-left: 11px; font-size: 12.200px; color: #45321f; }
.fav { width: 16px; height: 16px; margin-right: 8px; }
.tab span { width: 124px; white-space: nowrap; letter-spacing: -.1px; line-height: 18px; }
.fade span { -webkit-mask-image: linear-gradient(90deg, #000 82%, transparent 97%); mask-image: linear-gradient(90deg, #000 82%, transparent 97%); }
.x { width: 9px; height: 9px; margin-left: 9px; }
.before-active { border-color: transparent; }
.active { position: relative; height: 34px; align-self: flex-end; border-color: transparent; color: #1f1f1f; padding: 0 0 6px 11px; z-index: 0; }
.active::before { content: ""; position: absolute; z-index: -1; inset: 0 1px 0 2px; background: #fff6f2; border-radius: 9px 9px 0 0; }
.active::after { content: ""; position: absolute; z-index: -1; left: -8px; right: -9px; bottom: 0; height: 10px; background: radial-gradient(circle at 0 0, transparent 10px, #fff6f2 10.500px) left / 10px 10px no-repeat, radial-gradient(circle at 100% 0, transparent 10px, #fff6f2 10.500px) right / 10px 10px no-repeat; }
.newtab { width: 12px; height: 12px; margin-left: 11px; }
.tabsearch { margin-left: auto; margin-right: 6px; width: 28px; height: 28px; border-radius: 9px; background: #fee9db; display: grid; place-items: center; }
.tabsearch svg { width: 10px; height: 8px; }
.navbar { height: 47px; flex: none; background: #fff6f2; border-bottom: 1px solid #f0dccd; border-radius: 9px 9px 0 0; display: flex; align-items: center; padding-left: 14px; gap: 20px; }
.nav { width: 16px; height: 16px; fill: none; stroke: #45321f; stroke-width: 1.800; }
.dim { opacity: .5; }
.omnibox { width: 1590px; height: 34px; border-radius: 17px; background: #ede2dd; display: flex; align-items: center; padding: 0 16px 0 5px; margin-left: -2px; }
.site { width: 24px; height: 24px; border-radius: 50%; background: #fff6f2; display: grid; place-items: center; }
.site svg { width: 14px; height: 12px; }
.url { margin-left: 8px; font-size: 14px; letter-spacing: -.06px; color: #45362d; }
.url b { font-weight: 400; color: #1d1510; }
.star { width: 17px; height: 17px; margin-left: auto; }
.extensions { display: flex; align-items: center; gap: 18px; margin-left: -2px; width: 186px; }
.extensions svg { width: 17px; height: 17px; }
.extensions svg:nth-of-type(2) { margin-left: 1px; }
.extensions svg:last-child { margin-left: -1px; }
.bar { width: 2px; height: 16px; background: #fcd6ba; margin-right: -1px; }
.extensions .me { width: 21px; height: 21px; border-radius: 50%; background: #4e2f2f; color: #f2dcd6; font-size: 12px; line-height: 20px; text-align: center; margin-left: -1px; flex: none; }

/* application */
.app { flex: 1; display: flex; min-height: 0; }
.sidebar { width: 78px; flex: none; background: linear-gradient(#ab49c1, #673ab1); display: flex; flex-direction: column; align-items: center; }
.logo { width: 37px; height: 26px; margin-top: 26px; }
.item { width: 58px; height: 43px; display: grid; place-items: center; flex: none; }
.item svg { width: 22px; height: 22px; fill: none; stroke: #fff; stroke-width: 1.150; }
.home { margin: 61px 0 33px; }
.on { background: #7a3795; border-radius: 4px; }
.sidebar hr { width: 27px; border: 0; border-top: 1px solid #9a71cc; margin: 212px 0 11px; flex: none; }
.help span { width: 23px; height: 23px; border-radius: 50%; background: #f98a2b; color: #fff; font-size: 16px; font-weight: 600; line-height: 23px; text-align: center; }
.help { height: 46px; }
.last { margin-top: -1px; }
.canvas { flex: 1; position: relative; background: #f7f7f7; overflow: hidden; }
.flow { width: 1842px; height: 897px; }
.flow text { font-family: Inter, sans-serif; }
.ops text { font-size: 8px; fill: #333; }
.name text { font-size: 13.500px; font-weight: 700; fill: #98d270; }
.name .dark { fill: #2a2a2a; }
.num text { font-size: 9.500px; fill: #999; text-anchor: middle; }
.sub text { font-size: 8px; fill: #2c2c2c; text-anchor: middle; }
.ord text { font-size: 10px; fill: #83bd5c; }
.cond text { font-size: 8px; fill: #333; }
.cond .tight { font-size: 7.500px; }
.zero { font-size: 8.500px; fill: #222; }

.title { position: absolute; left: 32px; top: 32px; width: 488px; height: 48px; border-radius: 6px; background: #fff; box-shadow: 0 5px 14px #0000001c; display: flex; align-items: center; padding-left: 9px; }
.title svg { width: 22px; height: 22px; fill: none; stroke: #5a6a78; stroke-width: 1.500; }
.title h1 { margin: 0 0 0 14px; width: 390px; font-size: 16px; font-weight: 400; color: #4b555e; white-space: nowrap; }
.title .sliders { width: 18px; height: 14px; margin-left: 18px; }

.toolbar { position: absolute; left: 433px; top: 813px; width: 976px; height: 52px; border-radius: 8px; background: #fff; box-shadow: 0 6px 16px #0000001f; display: flex; align-items: center; padding-left: 10px; z-index: 3; }
.play { width: 32px; height: 32px; border-radius: 5px; background: #6600c5; display: grid; place-items: center; }
.play svg { width: 16px; height: 16px; }
.run { width: 90px; margin-left: 8px; font-size: 16px; font-weight: 500; color: #6600c5; }
.sep { width: 1px; height: 12px; background: #c6ccd2; }
.schedule { margin-left: 12px; width: 151px; height: 33px; border-radius: 6px; background: #f1f2f5; display: flex; align-items: center; padding-left: 8px; font-size: 12.500px; font-weight: 500; color: #3e444a; gap: 8px; white-space: nowrap; letter-spacing: -.27px; }
.toggle { width: 30px; height: 16px; border-radius: 8px; background: radial-gradient(circle at 8px 8px, #fff 6px, #c3cbd3 6.500px); }
.s2 { margin-left: 12px; }
.tools { display: grid; grid-template-columns: 37px 40px 39px 41px 40px 39px 29px; margin-left: 15px; }
.tools svg { width: 16px; height: 16px; fill: none; stroke: #222; stroke-width: 1.500; }
.s3 { margin-left: 7px; }
.apps { display: flex; gap: 4px; margin-left: 16px; }
.apps b { width: 34px; height: 32px; border-radius: 4px; display: grid; place-items: center; }
.apps svg { width: 16px; height: 16px; }
.c1 { background: #98d06f; } .c2 { background: #a687e3; } .c3 { background: #f95c56; } .c4 { background: #e74060; margin-left: 10px; } .c5 { background: #4880ee; } .c6 { background: #1aa260; }
.plus { width: 12px; height: 12px; margin-left: 14px; }
.queue { width: 32px; height: 32px; margin-left: 11px; border-radius: 4px; background: #c3cad2; display: grid; place-items: center; }
.queue svg { width: 18px; height: 16px; overflow: visible; }
.chev { width: 8px; height: 14px; margin-left: 24px; }

.assist { position: absolute; right: 28px; top: 817px; display: flex; gap: 8px; }
.bulb { width: 40px; height: 40px; border-radius: 50%; background: #6600c5; display: grid; place-items: center; }
.bulb svg { width: 16px; height: 20px; }
.ai { width: 127px; height: 40px; border-radius: 20px; background: #5217b6; color: #fff; display: flex; align-items: center; padding-left: 18px; font-size: 16px; font-weight: 500; }
.ai svg { width: 17px; height: 17px; margin-left: 7px; }
.ai em { width: 44px; height: 20px; border: 1px solid #eee; border-radius: 3px; font-size: 11px; font-weight: 600; line-height: 18px; text-align: center; margin-left: 7px; }

/* filter dialog */
.modal { position: absolute; left: 671px; top: 250px; width: 450px; height: 516px; border-radius: 4px; background: #f7f7f7; box-shadow: 0 20px 90px #00000038; z-index: 2; display: flex; flex-direction: column; }
.modal::before { content: ""; position: absolute; left: -10px; top: 248px; border: solid transparent; border-width: 10px 10px 10px 0; border-right-color: #f7f7f7; }
.modal header { height: 50px; flex: none; border-radius: 4px 4px 0 0; background: linear-gradient(100deg, #ab49c1, #673ab1); display: grid; grid-template-columns: 308px 29px 31px 30px 30px; align-items: center; padding-left: 15px; }
.modal h2 { margin: 0; font-size: 16px; font-weight: 400; color: #fff; }
.modal header svg { width: 14px; height: 14px; margin-left: 5px; }
.body { padding: 16px 15px 0; flex: 1; font-size: 14px; color: #2d2f31; }
.lbl { display: block; line-height: 20px; }
.input { height: 38px; border: 1px solid #cfcfcf; border-radius: 4px; background: #fff; font-size: 16px; line-height: 36px; padding-left: 12px; color: #40474e; display: flow-root; }
.body > .input { margin-top: 8px; }
.body p { margin: 16px 10px 0 0; line-height: 21px; }
.radios { display: flex; align-items: center; margin-top: 9px; height: 22px; }
.radios i { width: 16px; height: 16px; border: 1px solid #bbb; border-radius: 50%; background: #fff; margin-right: 8px; }
.radios span { width: 40px; }
.radios .sel { border: 5px solid #6600c5; }
.cnd { margin-top: 18px; }
.rule { display: flex; margin-top: 8px; border-left: 5px solid #04609c; padding-left: 15px; height: 160px; }
.fields { width: 375px; }
.tag { display: block; width: 77px; height: 18px; margin: 10px 0 0 2px; background: #4880ee; color: #fff; border-radius: 2px; font: 12px/18px "DejaVu Sans Mono", monospace; text-align: center; white-space: nowrap; }
.select { height: 38px; font-size: 16px; line-height: 36px; padding: 0 12px 1px; color: #40474e; display: flex; justify-content: space-between; align-items: center; }
.select svg { width: 10px; height: 6px; }
.adds { display: flex; gap: 8px; margin-top: 15px; }
.adds button { height: 31px; width: 108px; border-radius: 3px; background: #37982b; color: #fff; }
.adds button + button { width: 98px; }
.remove { width: 15px; height: 15px; margin: 11px 0 0 9px; }
.modal footer { height: 52px; flex: none; border-top: 1px solid #e8e8e8; display: flex; justify-content: flex-end; gap: 5px; padding: 10px 15px 0 0; font-size: 14px; }
.modal footer button { height: 31px; border-radius: 3px; }
.modal footer .cancel { width: 64px; border: 1px solid #5d6772; background: #fff; color: #66717c; }
.save { width: 50px; background: #6600bd; color: #fff; }

/* desktop and dock */
.desk { flex: 1; position: relative; display: flex; justify-content: center; margin-top: -13px; padding-top: 13px; z-index: -1; }
.wall { position: absolute; left: 0; top: 0; width: 1920px; height: 82px; z-index: -1; }
.dock { width: 796px; height: 64px; border-radius: 14px; border: 1px solid #f3a58080; background: linear-gradient(90deg, #d98a55, #e56f5b 20%, #f2925b 38%, #ec7a5a 55%, #f0665c 75%, #e76a57); display: flex; padding: 9px 0 0 2px; }
.dock span { width: 53px; display: flex; flex-direction: column; align-items: center; flex: none; }
.dock span svg { width: 39px; height: 39px; }
.dock span .trash { height: 46px; margin-top: -4px; }
.dock i { flex: none; width: 1px; height: 47px; margin: -1px 11.500px 0; background: #b53f34; }
.run-dot::after { content: ""; width: 4px; height: 4px; border-radius: 50%; background: #54100d; margin-top: 9px; }
.pc { font: 700 13px Inter, sans-serif; fill: #fff; }
```
